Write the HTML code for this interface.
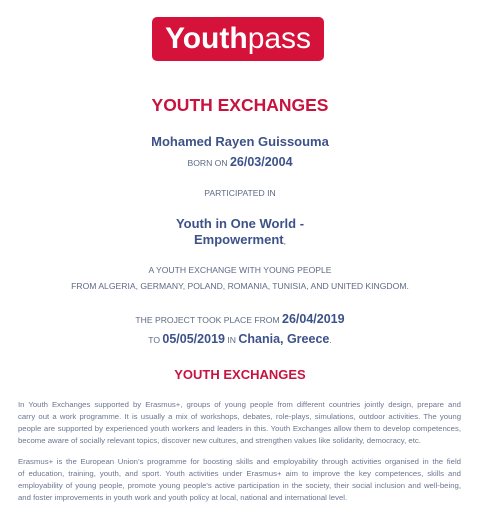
<!DOCTYPE html>
<html><head><meta charset="utf-8"><style>
body{margin:0;width:480px;height:521px;background:#fff;font-family:"Liberation Sans",Arial,sans-serif;position:relative;overflow:hidden}
.c{position:absolute;left:0;width:480px;text-align:center;white-space:nowrap;line-height:1}
.logo{position:absolute;left:152px;top:17px;width:172px;height:44px;background:#d5123a;border-radius:5px;color:#fff;font-size:30px;line-height:44px;text-align:center}
.red{color:#c8133f;font-weight:bold}
.blue{color:#3d5289;font-weight:bold}
.sm{color:#5e6a85;font-size:8.6px}
.p{position:absolute;left:18px;width:443px;font-size:7.75px;line-height:12px;color:#6c7691}
.p div{text-align:justify;text-align-last:justify;white-space:nowrap}
.p div.l{text-align-last:left}
</style></head><body>
<div class="logo"><b>Youth</b>pass</div>
<div class="c red" style="top:97px;font-size:17.5px">YOUTH EXCHANGES</div>
<div class="c blue" style="top:135px;font-size:13px">Mohamed Rayen Guissouma</div>
<div class="c" style="top:154px"><span class="sm">BORN ON </span><span class="blue" style="font-size:12.5px">26/03/2004</span></div>
<div class="c sm" style="top:189px">PARTICIPATED IN</div>
<div class="c blue" style="top:217px;font-size:13px">Youth in One World -</div>
<div class="c blue" style="top:233px;font-size:13px">Empowerment<span class="sm" style="font-weight:normal">,</span></div>
<div class="c sm" style="top:266px">A YOUTH EXCHANGE WITH YOUNG PEOPLE</div>
<div class="c sm" style="top:282px">FROM ALGERIA, GERMANY, POLAND, ROMANIA, TUNISIA, AND UNITED KINGDOM.</div>
<div class="c" style="top:311px"><span class="sm">THE PROJECT TOOK PLACE FROM </span><span class="blue" style="font-size:12.5px">26/04/2019</span></div>
<div class="c" style="top:331px"><span class="sm">TO </span><span class="blue" style="font-size:12.5px">05/05/2019</span><span class="sm"> IN </span><span class="blue" style="font-size:12.5px">Chania, Greece</span><span class="sm">.</span></div>
<div class="c red" style="top:368px;font-size:13px">YOUTH EXCHANGES</div>
<div class="p" style="top:399px">
<div>In Youth Exchanges supported by Erasmus+, groups of young people from different countries jointly design, prepare and</div>
<div>carry out a work programme. It is usually a mix of workshops, debates, role-plays, simulations, outdoor activities. The young</div>
<div>people are supported by experienced youth workers and leaders in this. Youth Exchanges allow them to develop competences,</div>
<div class="l">become aware of socially relevant topics, discover new cultures, and strengthen values like solidarity, democracy, etc.</div>
</div>
<div class="p" style="top:456px">
<div>Erasmus+ is the European Union’s programme for boosting skills and employability through activities organised in the field</div>
<div>of education, training, youth, and sport. Youth activities under Erasmus+ aim to improve the key competences, skills and</div>
<div>employability of young people, promote young people's active participation in the society, their social inclusion and well-being,</div>
<div class="l">and foster improvements in youth work and youth policy at local, national and international level.</div>
</div>
</body></html>
